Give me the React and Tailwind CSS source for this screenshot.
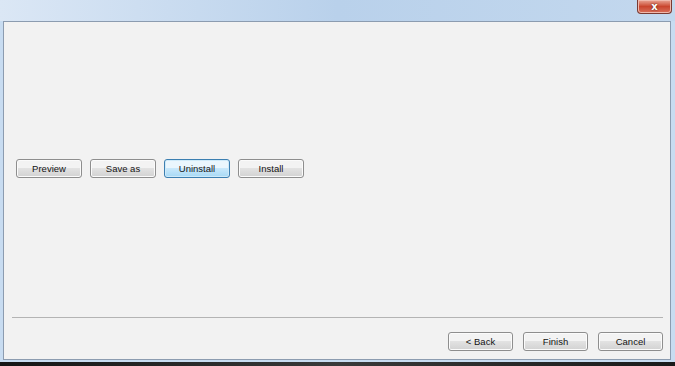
import React from 'react';

function WinButton({ label, focused = false, width = "w-[66px]" }) {
    return (
        <button
            className={`${width} h-[19px] rounded-[3px] border text-[9.5px] leading-none text-[#141414] ${focused
                ? "border-[#3c7fb1] bg-linear-to-b from-[#eaf6fd] from-45% via-[#c8e8fb] via-50% to-[#a7d9f5] shadow-[inset_0_0_0_1px_#cfeaf9]"
                : "border-[#8e8e8e] bg-linear-to-b from-[#f3f3f3] from-45% via-[#e2e2e2] via-50% to-[#d2d2d2] shadow-[inset_0_0_0_1px_#fbfbfb]"}`}
            style={{ fontFamily: '"Liberation Sans", Arial, sans-serif' }}
        >
            {label}
        </button>
    );
}

export default function App() {
    return (
        <div className="w-[675px] h-[366px] flex flex-col bg-[#1b1b1b] overflow-hidden">
            {/* Window frame */}
            <div className="h-[362px] flex flex-col bg-[#c8dcf1]">
                {/* Title bar */}
                <div className="h-[21px] flex justify-end pr-[3px] bg-linear-to-r from-[#dbe7f5] via-[#b9d1eb] to-[#c3d8ee]">
                    <div className="w-[35px] h-[14px] flex items-center justify-center rounded-b-[4px] border border-t-0 border-[#7a3a32] bg-linear-to-b from-[#e8a596] via-[#c9452e] to-[#d8705c] shadow-[inset_0_0_0_1px_#f0b9ad]">
                        <span
                            className="text-[10px] font-bold leading-none text-white [text-shadow:0_0_2px_#4a1a14]"
                            style={{ fontFamily: '"DejaVu Sans", sans-serif' }}
                        >
                            x
                        </span>
                    </div>
                </div>

                {/* Content panel */}
                <div className="ml-[3px] mr-[4px] mb-[2px] h-[339px] flex flex-col border border-[#8c9cb0] bg-[#f2f2f2]">
                    <div className="flex-1 pt-[137px] pl-[12px]">
                        <div className="flex gap-[8px]">
                            <WinButton label="Preview" />
                            <WinButton label="Save as" />
                            <WinButton label="Uninstall" focused />
                            <WinButton label="Install" />
                        </div>
                    </div>

                    <div className="ml-[8px] mr-[7px] h-px bg-[#b4b4b4]" />

                    <div className="flex justify-end gap-[10px] pt-[14px] pb-[8px] pr-[7px]">
                        <WinButton label="< Back" width="w-[65px]" />
                        <WinButton label="Finish" width="w-[65px]" />
                        <WinButton label="Cancel" width="w-[65px]" />
                    </div>
                </div>
            </div>

            {/* Desktop behind */}
            <div className="flex-1 bg-linear-to-r from-[#151515] via-[#3a3a3a] to-[#1a1a1a]" />
        </div>
    );
}
